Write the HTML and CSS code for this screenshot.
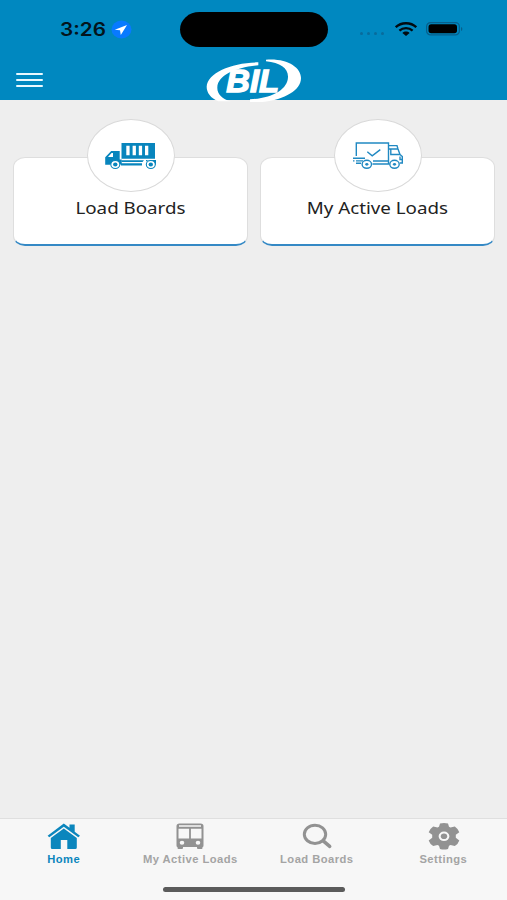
FILE: index.html
```html
<!DOCTYPE html>
<html lang="en">
<head>
<meta charset="utf-8">
<title>BIL</title>
<link rel="stylesheet" href="styles.css">
</head>
<body>
<div class="app">
  <header class="header">
    <div class="status">
      <div class="status-left">
        <span class="time"><span class="time-text">3:26</span></span>
        <svg class="location" viewBox="0 0 21 19"><ellipse cx="10.5" cy="9.5" rx="10" ry="9" fill="#087aff"/><path d="M16 5 3.8 9.7l5.2.6.8 4.7z" fill="#fff"/></svg>
      </div>
      <div class="island"></div>
      <div class="status-right">
        <span class="dots"><i></i><i></i><i></i><i></i></span>
        <svg class="wifi" viewBox="0 0 22 14"><g fill="none" stroke="#020b10" stroke-width="2.3"><path d="M.8 5.2C6.2-.1 15.8-.1 21.2 5.2"/><path d="M4.4 8.6c3.7-3.4 9.5-3.4 13.2 0"/></g><path d="m7.4 10.9c2-1.8 5.2-1.8 7.2 0L11 14z" fill="#020b10"/></svg>
        <svg class="battery" viewBox="0 0 37 14"><rect x=".6" y=".6" width="32.8" height="12.3" rx="4" fill="none" stroke="#075f8b" stroke-width="1.2"/><rect x="2.5" y="2.3" width="28.5" height="9" rx="2.7" fill="#000"/><path d="M35 5v4q1.4-.6 1.4-2T35 5" fill="#075f8b"/></svg>
      </div>
    </div>
    <div class="navbar">
      <div class="menu"><i></i><i></i><i></i></div>
      <svg class="logo" viewBox="33 22 288 134">
        <g fill="#fff">
          <path d="M190 35C110 36 38 65 35 108c0 18 12 34 35 44h38C80 145 66 129 67 110c1-36 57-61 123-66z"/>
          <path d="M213 27c63-5 105 23 105 55 0 43-66 74-153 74v-10c68-3 113-30 114-67 1-26-23-43-66-47z"/>
        </g>
        <text class="logo-text" x="94" y="123" textLength="158" lengthAdjust="spacingAndGlyphs">BIL</text>
      </svg>
    </div>
  </header>

  <main class="cards">
    <section class="card">
      <div class="bubble">
        <svg class="truck truck-solid" viewBox="0 0 52 28">
          <g fill="#0885bd">
            <path fill-rule="evenodd" d="M16.5 1h33.5v15.8H16.5zM21.3 3.8v9.4h3.3V3.8zm6.3 0v9.4h3.3V3.8zm6.2 0v9.4h3.3V3.8zm6.2 0v9.4h3.3V3.8z"/>
            <path fill-rule="evenodd" d="M.2 22.8v-7.5L6.2 9h8.500v8.400h2v5.200H15a5.200 4.700 0 0 0-9.600.2zM3 15h5v-4H6.600z"/>
            <path d="M16.500 18.300h22.500l-1.500 1.700H16.500zM16 21.200h21v2.200H16zM41 18h10v4.800h-1.400a5 4.500 0 0 0-8.600-3z"/>
          </g>
          <g fill="#fff" stroke="#0885bd" stroke-width="1.1"><ellipse cx="10.300" cy="22.500" rx="4.500" ry="4"/><ellipse cx="45.800" cy="22.500" rx="4.500" ry="4"/></g>
          <g fill="#0885bd"><ellipse cx="10.300" cy="22.500" rx="2.200" ry="1.900"/><ellipse cx="45.800" cy="22.500" rx="2.200" ry="1.900"/></g>
        </svg>
      </div>
      <h2 class="card-title">Load Boards</h2>
    </section>
    <section class="card">
      <div class="bubble">
        <svg class="truck" viewBox="0 0 52 28">
          <g fill="none" stroke="#2189c2" stroke-width="1.4">
            <path d="M3.300 14V1h32.200v21M14.300 9.800l4.900 4 8.100-6.200"/>
            <path d="M35.500 3.600h8.500l1 3.400M36 7h9l2 5.500H37.800V7M47 12.500l2.300 2v6.500h-2.500M49 17.500h-2v-3M0 16.200h12M3 18.900h7M0 18.900h1.500M3 21.300h5M20 19h15M19.500 22h17"/>
            <ellipse cx="13.800" cy="22.300" rx="4.700" ry="4"/><ellipse cx="41.500" cy="22.300" rx="4.700" ry="4"/>
          </g>
          <g fill="#2189c2"><ellipse cx="13.800" cy="22.300" rx="1.600" ry="1.400"/><ellipse cx="41.500" cy="22.300" rx="1.600" ry="1.400"/></g>
        </svg>
      </div>
      <h2 class="card-title">My Active Loads</h2>
    </section>
  </main>

  <footer class="footer">
    <nav class="tabs">
      <a class="tab active">
        <svg class="tab-icon" viewBox="-.8 0 34 28"><path d="M17 .5.8 12.700l1.700 1.600L17 3.700l14.500 10.600 1.700-1.600-5.300-4V1.500h-5.200v3.300zM17 5.500 4 15V24.500q0 1.500 1.500 1.500H14v-9h6.500v9h8q1.500 0 1.500-1.500V15z"/></svg>
        <span class="label">Home</span>
      </a>
      <a class="tab">
        <svg class="tab-icon" viewBox="0 0 34 28"><path fill-rule="evenodd" d="M6.500.5h21q3 0 3 2.500v19.400q0 1.500-1 1.500v1.200q0 1-1 1h-3.500q-1 0-1-1v-1.200h-14v1.200q0 1-1 1H5.500q-1 0-1-1v-1.200q-1 0-1-1.500V3q0-2.500 3-2.500zM6 2.200v1.600h22V2.200zM5.500 5.700v9.700h10.600V5.700zm12.400 0v9.700h10.600V5.700zM9 17.700a2.300 2 0 1 0 0 4 2.300 2 0 1 0 0-4zm16 0a2.300 2 0 1 0 0 4 2.300 2 0 1 0 0-4z"/></svg>
        <span class="label">My Active Loads</span>
      </a>
      <a class="tab">
        <svg class="tab-icon" viewBox="0 0 34 28"><g fill="none" stroke="#929292"><ellipse cx="15" cy="11.300" rx="10.700" ry="9.100" stroke-width="3"/><path d="m23.200 17.800 6.500 5.500" stroke-width="3.500" stroke-linecap="round"/></g></svg>
        <span class="label">Load Boards</span>
      </a>
      <a class="tab">
        <svg class="tab-icon" viewBox="0 0 34 28"><path fill-rule="evenodd" d="M13 .5Q17-.5 21 .5l1 3.300 1.500.8 4.300-1q3.500 2.500 4.500 5.600l-3.500 2.600v3l3.500 2.600q-1 3.300-4.500 5.600l-4.300-1-1.500.8-1 3.200q-4 1-8 0l-1-3.200-1.500-.8-4.300 1q-3.500-2.300-4.500-5.600l3.500-2.600v-3L1.700 9.200q1-3.100 4.500-5.600l4.300 1 1.500-.8zM17 8.500a5.400 4.800 0 1 0 0 9.600 5.400 4.800 0 1 0 0-9.600z"/><ellipse cx="17" cy="13.300" rx="3.200" ry="2.800"/></svg>
        <span class="label">Settings</span>
      </a>
    </nav>
    <div class="home-bar"></div>
  </footer>
</div>
</body>
</html>
```

FILE: styles.css
```css
* { box-sizing: border-box; }
body { margin: 0; background: #eee; font-family: "Liberation Sans", Arial, sans-serif; }
.app { width: 507px; height: 900px; display: flex; flex-direction: column; overflow: hidden; }
svg { display: block; }

.header { height: 100px; flex: none; background: #0088c0; }
.status { height: 58px; display: grid; grid-template-columns: 180px 148px 1fr; padding-top: 12px; }
.status-left { display: flex; align-items: center; height: 35px; padding-left: 60px; gap: 5px; }
.time { width: 46px; font: 600 18px Inter, "Liberation Sans", sans-serif; color: #03141c; }
.time-text { display: inline-block; transform: scaleX(1.15); transform-origin: left; }
.location { width: 21px; height: 19px; }
.island { height: 35px; border-radius: 20px / 18px; background: #000; }
.status-right { display: flex; align-items: center; height: 35px; padding-left: 32px; }
.dots { display: flex; gap: 4px; width: 26px; margin: 8px 9px 0 0; }
.dots i { width: 3px; height: 3px; border-radius: 50%; background: #086c9c; }
.wifi { width: 22px; height: 14px; margin: -2px 9px 0 0; }
.battery { width: 37px; height: 14px; margin-top: -2px; }

.navbar { height: 43px; display: flex; padding-left: 16px; }
.menu { width: 27px; height: 14px; margin: 15px 163px 0 0; display: flex; flex-direction: column; justify-content: space-between; }
.menu i { height: 2px; border-radius: 1px; background: #e9f9ff; }
.logo { width: 96px; height: 44.7px; flex: none; margin-top: -.5px; }
.logo-text { font: italic bold 92px "Liberation Sans", Arial, sans-serif; fill: #fff; stroke: #fff; stroke-width: 4px; }

.cards { flex: 1; display: grid; grid-template-columns: 235px 235px; gap: 12px; padding: 57px 13px 0; align-items: start; }
.card { height: 89px; background: #fff; border: 1px solid #dedede; border-bottom: 2px solid #3589c5; border-radius: 12px / 10px; display: flex; flex-direction: column; align-items: center; }
.bubble { width: 88px; height: 73px; flex: none; margin-top: -39px; border: 1px solid #d9d9d9; border-radius: 50%; background: #fff; padding: 22px 0 0 18px; }
.truck { width: 52px; height: 28px; }
.truck-solid { margin-left: -1px; }
.card-title { margin: 5px 0 0; font: 400 15.5px/22px "Noto Sans", "Open Sans", sans-serif; color: #222; white-space: nowrap; transform: scaleX(1.21); }

.footer { height: 82px; flex: none; background: #f7f7f7; border-top: 1px solid #dfdfdf; display: flex; flex-direction: column; align-items: center; }
.tabs { width: 507px; height: 68px; display: grid; grid-template-columns: repeat(4, 1fr); }
.tab { display: flex; flex-direction: column; align-items: center; padding-top: 4px; color: #929292; }
.active { color: #0b86bd; }
.tab-icon { width: 34px; height: 28px; fill: currentColor; }
.label { font-size: 10px; font-weight: 700; line-height: 14px; margin-top: 2px; white-space: nowrap; letter-spacing: .4px; transform: scaleX(1.12); }
.tab:not(.active) .label { color: #a4a4a4; }
.home-bar { width: 182px; height: 5px; border-radius: 3px; background: #5b5b5b; }
```
